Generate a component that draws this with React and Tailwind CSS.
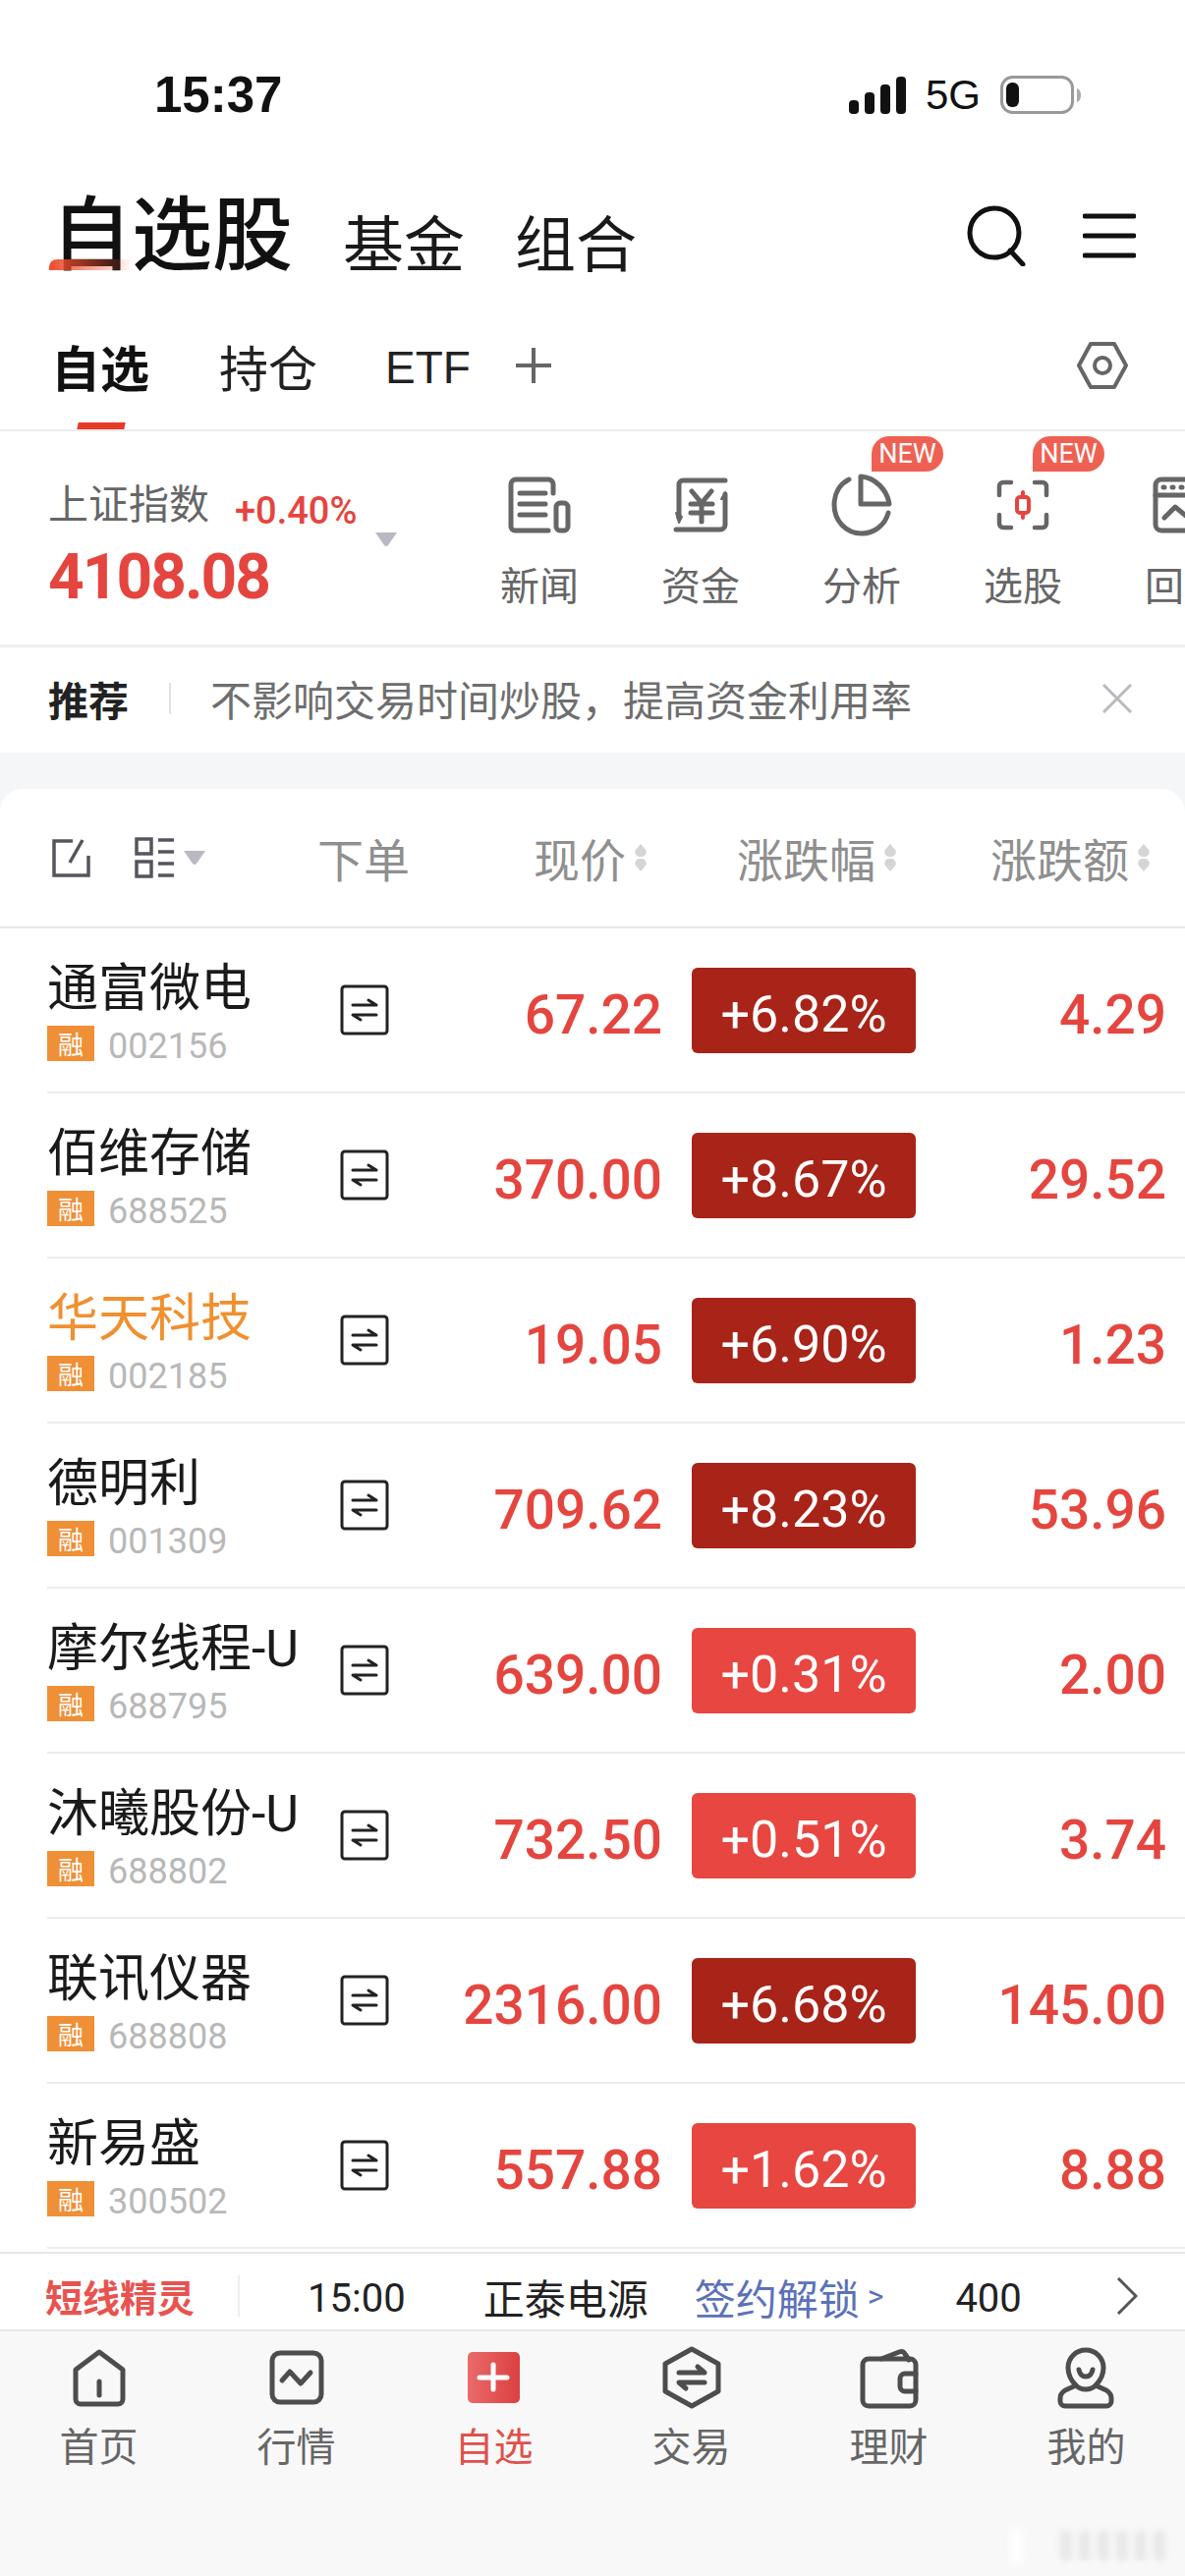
import { Fragment } from 'react';

const stocks = [
  { name: '通富微电', code: '002156', price: '67.22', pct: '+6.82%', chg: '4.29', dark: true },
  { name: '佰维存储', code: '688525', price: '370.00', pct: '+8.67%', chg: '29.52', dark: true },
  { name: '华天科技', code: '002185', price: '19.05', pct: '+6.90%', chg: '1.23', dark: true, orange: true },
  { name: '德明利', code: '001309', price: '709.62', pct: '+8.23%', chg: '53.96', dark: true },
  { name: '摩尔线程-U', code: '688795', price: '639.00', pct: '+0.31%', chg: '2.00' },
  { name: '沐曦股份-U', code: '688802', price: '732.50', pct: '+0.51%', chg: '3.74' },
  { name: '联讯仪器', code: '688808', price: '2316.00', pct: '+6.68%', chg: '145.00', dark: true },
  { name: '新易盛', code: '300502', price: '557.88', pct: '+1.62%', chg: '8.88' },
];

function NewsIcon() {
  return (
    <svg width="64" height="58" viewBox="0 0 64 58" fill="none" stroke="#666" strokeWidth="5" strokeLinecap="round" strokeLinejoin="round">
      <path d="M46 17V8a5 5 0 0 0-5-5H8a5 5 0 0 0-5 5v43a4 4 0 0 0 4 4h34" />
      <path d="M12 17h26M12 28h26M12 39h26" />
      <rect x="49" y="27" width="12" height="28" rx="4" />
    </svg>
  );
}

function FundIcon() {
  return (
    <svg width="56" height="58" viewBox="0 0 56 58" fill="none" stroke="#666" strokeWidth="5" strokeLinecap="round" strokeLinejoin="round">
      <path d="M53 4H10a4 4 0 0 0-4 4v34" />
      <path d="M3 37l3 10 3-6z" fill="#666" strokeWidth="2" />
      <path d="M3 54h45a5 5 0 0 0 5-5V18" />
      <path d="M53 16l-4 7 4 0z" fill="#666" strokeWidth="2" />
      <path d="M19 15l10 12 10-12M18 28h22M18 37h22M29 27v19" />
    </svg>
  );
}

function PieIcon() {
  return (
    <svg width="62" height="64" viewBox="0 0 62 64" fill="none" stroke="#666" strokeWidth="5" strokeLinecap="round" strokeLinejoin="round">
      <path d="M18 6C8 11 3 21 3 32c0 16 12 29 28 29 13 0 24-9 27-21" />
      <path d="M30 3c15 1 27 14 29 28H30z" />
    </svg>
  );
}

function PickIcon() {
  return (
    <svg width="54" height="52" viewBox="0 0 54 52" fill="none" stroke="#666" strokeWidth="4.500" strokeLinecap="round" strokeLinejoin="round">
      <path d="M15 3H7a4 4 0 0 0-4 4v9M39 3h8a4 4 0 0 1 4 4v9M15 49H7a4 4 0 0 1-4-4v-9M39 49h8a4 4 0 0 0 4-4v-9" />
      <rect x="21" y="18" width="12" height="16" rx="3" stroke="#e5453f" strokeWidth="4" />
      <path d="M27 13v4M27 35v4" stroke="#e5453f" strokeWidth="4" />
    </svg>
  );
}

function BacktestIcon() {
  return (
    <svg width="64" height="58" viewBox="0 0 64 58" fill="none" stroke="#666" strokeWidth="5" strokeLinecap="round" strokeLinejoin="round">
      <rect x="3" y="3" width="58" height="52" rx="6" />
      <path d="M3 19h58M12 42l11-11 11 9" />
      <path d="M11 11h1M20 11h1M29 11h1" />
    </svg>
  );
}

const tools = [
  { label: '新闻', icon: <NewsIcon /> },
  { label: '资金', icon: <FundIcon /> },
  { label: '分析', icon: <PieIcon />, isNew: true },
  { label: '选股', icon: <PickIcon />, isNew: true },
  { label: '回测', icon: <BacktestIcon /> },
];

function SortArrows() {
  return (
    <svg width="14" height="28" viewBox="0 0 14 28" fill="#d5d5d8" className="ml-[8px] shrink-0">
      <path d="M7 0l5.5 6.5A5 5 0 0 1 7 13 5 5 0 0 1 1.500 6.500z" />
      <path d="M7 28l5.500-6.500A5 5 0 0 0 7 15a5 5 0 0 0-5.500 6.500z" />
    </svg>
  );
}

function SwapIcon() {
  return (
    <svg width="50" height="52" viewBox="0 0 50 52" fill="none" stroke="#222" strokeWidth="3" strokeLinecap="round" strokeLinejoin="round" className="shrink-0">
      <rect x="2" y="2" width="46" height="48" rx="3" />
      <path d="M13 21h24l-8-5" />
      <path d="M37 31H13l8 5" />
    </svg>
  );
}

function NavIcon({ type }) {
  const common = { fill: 'none', stroke: '#4d4d4d', strokeWidth: 5, strokeLinecap: 'round', strokeLinejoin: 'round' };
  if (type === 'home') {
    return (
      <svg width="60" height="64" viewBox="0 0 60 64" {...common}>
        <path d="M30 6L6 24v30a5 5 0 0 0 5 5h38a5 5 0 0 0 5-5V24z" />
        <path d="M30 36v14" />
      </svg>
    );
  }
  if (type === 'market') {
    return (
      <svg width="60" height="64" viewBox="0 0 60 64" {...common}>
        <rect x="5" y="7" width="50" height="50" rx="8" />
        <path d="M15 35l8-9 11 12 10-11" />
      </svg>
    );
  }
  if (type === 'add') {
    return (
      <svg width="60" height="64" viewBox="0 0 60 64">
        <defs>
          <linearGradient id="addFill" x1="0" x2="1" y1="0" y2="0">
            <stop offset="0" stopColor="#e96a6a" />
            <stop offset="1" stopColor="#dd4040" />
          </linearGradient>
        </defs>
        <rect x="3" y="6" width="53" height="52" rx="5" fill="url(#addFill)" />
        <path d="M29 19v25M15 32h28" stroke="#fff" strokeWidth="5" strokeLinecap="round" />
      </svg>
    );
  }
  if (type === 'trade') {
    return (
      <svg width="60" height="64" viewBox="0 0 60 64" {...common}>
        <path d="M30 3L57 18v28L30 61 3 46V18z" />
        <path d="M17 27h26l-7-6M43 37H17l7 6" />
      </svg>
    );
  }
  if (type === 'wallet') {
    return (
      <svg width="60" height="64" viewBox="0 0 60 64" {...common}>
        <path d="M22 13L40 6c3-1 5 0 6 2l4 6" />
        <path d="M9 13h42a6 6 0 0 1 6 6v36a6 6 0 0 1-6 6H9a6 6 0 0 1-6-6V19a6 6 0 0 1 6-6z" />
        <path d="M57 28H46a5 5 0 0 0-5 5v8a5 5 0 0 0 5 5h11" />
      </svg>
    );
  }
  return (
    <svg width="60" height="64" viewBox="0 0 60 64" {...common}>
      <path d="M19 40c-5-5-8-11-8-18C11 12 19 4 29 4s18 8 18 18c0 7-3 13-8 18" />
      <path d="M19 40l-11 5c-3 2-5 4-5 8v3a5 5 0 0 0 5 5h42a5 5 0 0 0 5-5v-3c0-4-2-6-5-8l-11-5c-3 3-6 4-10 4s-7-1-10-4z" />
      <path d="M22 24c1 5 4 7 7 7s6-2 7-7" />
    </svg>
  );
}

const navItems = [
  { label: '首页', type: 'home' },
  { label: '行情', type: 'market' },
  { label: '自选', type: 'add', active: true },
  { label: '交易', type: 'trade' },
  { label: '理财', type: 'wallet' },
  { label: '我的', type: 'me' },
];

export default function App() {
  return (
    <div className="relative flex h-[2622px] w-[1206px] flex-col overflow-hidden bg-white font-['Noto_Sans_CJK_SC',sans-serif]">
      {/* status bar */}
      <div className="flex h-[180px] items-start justify-between pl-[157px] pr-[106px] pt-[68px]">
        <span className="font-['Liberation_Sans',sans-serif] text-[51px] font-bold leading-[58px] text-[#111]">15:37</span>
        <div className="flex h-[58px] items-center gap-[20px]">
          <svg width="58" height="38" viewBox="0 0 58 38" fill="#111">
            <rect x="0" y="24" width="10" height="14" rx="4" />
            <rect x="16" y="16" width="10" height="22" rx="4" />
            <rect x="32" y="8" width="10" height="30" rx="4" />
            <rect x="48" y="0" width="10" height="38" rx="4" />
          </svg>
          <span className="font-['Liberation_Sans',sans-serif] text-[42px] leading-[58px] text-[#111]">5G</span>
          <svg width="82" height="40" viewBox="0 0 82 40" fill="none">
            <rect x="1.5" y="1.5" width="72" height="36" rx="11" stroke="#999" strokeWidth="3" />
            <rect x="6" y="7" width="13" height="25" rx="6" fill="#111" />
            <path d="M78 13c3 1 4 4 4 7s-1 6-4 7z" fill="#aaa" />
          </svg>
        </div>
      </div>

      {/* title row */}
      <div className="relative flex h-[116px] items-end pl-[52px] pr-[50px]">
        <span className="mb-[8px] text-[82px] font-medium leading-[110px] text-[#111]">自选股</span>
        <span className="mb-[3px] ml-[51px] text-[62px] leading-[96px] text-[#1a1a1a]">基金</span>
        <span className="mb-[3px] ml-[51px] text-[62px] leading-[96px] text-[#1a1a1a]">组合</span>
        <div className="ml-auto flex items-center gap-[56px] self-center pt-[4px]">
          <svg width="62" height="62" viewBox="0 0 62 62" fill="none" stroke="#111" strokeWidth="5" strokeLinecap="round">
            <circle cx="28" cy="28" r="25" />
            <path d="M44 46l13 14" />
          </svg>
          <svg width="54" height="46" viewBox="0 0 54 46" stroke="#111" strokeWidth="5" strokeLinecap="round">
            <path d="M2 3h50M2 23h50M2 43h50" />
          </svg>
        </div>
        <span className="absolute bottom-[21px] left-[50px] h-[11px] w-[86px] rounded-tl-[8px] bg-gradient-to-r from-[#ec4a2c] to-[#ec4a2c00]" />
      </div>

      {/* sub tabs */}
      <div className="relative flex h-[143px] items-center border-b-2 border-[#ececec] pl-[52px] pr-[58px] pt-[10px]">
        <span className="text-[50px] font-bold leading-[70px] text-[#111]">自选</span>
        <span className="ml-[71px] text-[50px] leading-[70px] text-[#222]">持仓</span>
        <span className="ml-[69px] pt-[5px] font-['Liberation_Sans',sans-serif] text-[46px] leading-[70px] text-[#222]">ETF</span>
        <svg width="36" height="36" viewBox="0 0 36 36" stroke="#666" strokeWidth="4" className="ml-[46px]">
          <path d="M18 0v36M0 18h36" />
        </svg>
        <svg width="52" height="50" viewBox="0 0 52 50" fill="none" stroke="#666" strokeWidth="4" strokeLinejoin="round" className="ml-auto">
          <path d="M14 3h24l12 22-12 22H14L2 25z" />
          <circle cx="26" cy="25" r="8" />
        </svg>
        <span className="absolute bottom-0 left-[79px] h-[7px] w-[48px] -skew-x-12 bg-[#e83a26]" />
      </div>

      {/* index and tools */}
      <div className="flex h-[220px] items-start overflow-hidden border-b-[3px] border-[#eeeeee]">
        <div className="relative w-[467px] shrink-0 pl-[49px] pt-[42px]">
          <div className="flex items-end">
            <span className="text-[41px] leading-[58px] text-[#666]">上证指数</span>
            <span className="-mb-[6px] ml-[26px] font-[Roboto,sans-serif] text-[38px] font-medium leading-[50px] text-[#e5453f]">+0.40%</span>
          </div>
          <div className="mt-[10px] font-[Roboto,sans-serif] text-[64px] font-bold leading-[78px] tracking-[-2px] text-[#e5453f]">4108.08</div>
          <svg width="24" height="16" viewBox="0 0 24 16" fill="#b9b9c4" className="absolute left-[381px] top-[102px]">
            <path d="M1 1h22L14 14a3 3 0 0 1-4 0z" />
          </svg>
        </div>
        <div className="flex">
          {tools.map((tool) => (
            <div key={tool.label} className="relative flex w-[164px] shrink-0 flex-col items-center pt-[43px]">
              <div className="flex h-[64px] items-center justify-center">{tool.icon}</div>
              <span className="mt-[20px] text-[40px] leading-[56px] text-[#666]">{tool.label}</span>
              {tool.isNew && (
                <span className="absolute left-[92px] top-[5px] flex h-[36px] w-[73px] items-center justify-center rounded-r-[18px] rounded-tl-[18px] bg-[#ee6152] font-[Roboto,sans-serif] text-[27px] leading-none text-white">NEW</span>
              )}
            </div>
          ))}
        </div>
      </div>

      {/* tip */}
      <div className="flex h-[107px] items-center rounded-b-[24px] bg-white pb-[3px] pl-[49px] pr-[54px]">
        <span className="text-[41px] font-bold leading-[56px] text-[#222]">推荐</span>
        <span className="ml-[41px] h-[32px] w-[2px] bg-[#e3e3e3]" />
        <span className="ml-[40px] text-[42px] leading-[60px] text-[#6e6e6e]">不影响交易时间炒股，提高资金利用率</span>
        <svg width="30" height="30" viewBox="0 0 30 30" stroke="#b9b9c0" strokeWidth="3" className="ml-auto">
          <path d="M1 1l28 28M29 1L1 29" />
        </svg>
      </div>

      <div className="h-[37px] shrink-0 bg-[#f5f6f8]" />

      {/* list */}
      <div className="flex-1 overflow-hidden bg-[#f5f6f8]">
        <div className="h-full rounded-t-[24px] bg-white">
          <div className="flex h-[142px] items-center border-b-2 border-[#e8e8e8]">
            <svg width="40" height="40" viewBox="0 0 40 40" fill="none" stroke="#55555f" strokeWidth="3.5" className="ml-[52px] shrink-0">
              <path d="M22 3H3v35h35V18M32 2L19 25" />
            </svg>
            <svg width="42" height="42" viewBox="0 0 42 42" fill="none" stroke="#55555f" strokeWidth="3.5" className="ml-[45px] shrink-0">
              <rect x="2" y="2" width="15" height="15" />
              <rect x="2" y="25" width="15" height="15" />
              <path d="M24 3h16M24 15h16M24 27h16M24 39h16" />
            </svg>
            <svg width="22" height="14" viewBox="0 0 22 14" fill="#b9b9c4" className="ml-[8px] shrink-0">
              <path d="M0 0h22L13 13a3 3 0 0 1-4 0z" />
            </svg>
            <span className="ml-[114px] w-[220px] text-[47px] leading-[60px] text-[#8f8f8f]">下单</span>
            <span className="flex w-[207px] items-center text-[47px] leading-[60px] text-[#8f8f8f]">现价<SortArrows /></span>
            <span className="flex w-[258px] items-center text-[47px] leading-[60px] text-[#8f8f8f]">涨跌幅<SortArrows /></span>
            <span className="flex items-center text-[47px] leading-[60px] text-[#8f8f8f]">涨跌额<SortArrows /></span>
          </div>
          {stocks.map((stock) => (
            <Fragment key={stock.code}>
              <div className="flex h-[166px] items-center pl-[48px]">
                <div className="w-[298px] shrink-0">
                  <div className={`whitespace-nowrap font-[Roboto,'Noto_Sans_CJK_SC',sans-serif] text-[52px] leading-[72px] ${stock.orange ? 'text-[#f0902f]' : 'text-[#1a1a1a]'}`}>{stock.name}</div>
                  <div className="mt-[1px] flex items-start">
                    <span className="flex h-[36px] w-[48px] items-center justify-center bg-[#ef8f36] text-[26px] leading-none text-white">融</span>
                    <span className="ml-[14px] pt-[1px] font-[Roboto,sans-serif] text-[36px] leading-[40px] text-[#b8b8b8]">{stock.code}</span>
                  </div>
                </div>
                <SwapIcon />
                <span className="w-[278px] shrink-0 pt-[10px] text-right font-[Roboto,sans-serif] text-[55px] font-medium leading-[70px] text-[#e5453f]">{stock.price}</span>
                <span className={`ml-[30px] flex h-[87px] w-[228px] shrink-0 items-center justify-center rounded-[6px] pt-[10px] font-[Roboto,sans-serif] text-[52px] font-normal text-white ${stock.dark ? 'bg-[#a82318]' : 'bg-[#e84640]'}`}>{stock.pct}</span>
                <span className="w-[255px] shrink-0 pt-[10px] text-right font-[Roboto,sans-serif] text-[55px] font-medium leading-[70px] text-[#e5453f]">{stock.chg}</span>
              </div>
              <div className="ml-[48px] h-[2px] bg-[#ececec]" />
            </Fragment>
          ))}
        </div>
      </div>

      {/* ticker */}
      <div className="relative flex h-[81px] shrink-0 items-center border-y-2 border-[#e6e6e6] bg-white pl-[46px] pr-[48px] pt-[9px]">
        <span className="text-[38px] font-bold leading-[56px] text-[#e8534f]">短线精灵</span>
        <span className="ml-[44px] h-[42px] w-[2px] bg-[#eeeeee]" />
        <span className="ml-[69px] pt-[6px] font-[Roboto,sans-serif] text-[40px] leading-[56px] text-[#222]">15:00</span>
        <span className="ml-[79px] pt-[2px] text-[42px] leading-[56px] text-[#222]">正泰电源</span>
        <span className="ml-[47px] pt-[2px] text-[42px] leading-[56px] text-[#5a72b8]">签约解锁</span>
        <span className="ml-[8px] font-[Roboto,sans-serif] text-[32px] leading-[56px] text-[#5a72b8]">&gt;</span>
        <span className="ml-[73px] pt-[6px] font-[Roboto,sans-serif] text-[40px] leading-[56px] text-[#222]">400</span>
        <svg width="22" height="38" viewBox="0 0 22 38" fill="none" stroke="#555" strokeWidth="3" className="ml-auto">
          <path d="M2 1l18 18L2 37" />
        </svg>
      </div>

      {/* bottom nav */}
      <div className="grid h-[249px] shrink-0 grid-cols-6 bg-[#f8f8f8] pt-[15px]">
        {navItems.map((item) => (
          <div key={item.label} className="flex flex-col items-center">
            <NavIcon type={item.type} />
            <span className={`mt-[8px] text-[40px] leading-[56px] ${item.active ? 'text-[#e0504c]' : 'text-[#666]'}`}>{item.label}</span>
          </div>
        ))}
      </div>

      {/* blurred watermark */}
      <div className="absolute bottom-[12px] right-[20px] flex h-[38px] items-center gap-[7px] opacity-80 blur-[3px]">
        <span className="mr-[30px] h-[36px] w-[14px] bg-white" />
        <span className="h-[30px] w-[12px] bg-[#e4e4e4]" />
        <span className="h-[30px] w-[12px] bg-[#e4e4e4]" />
        <span className="h-[30px] w-[12px] bg-[#e4e4e4]" />
        <span className="h-[30px] w-[12px] bg-[#e4e4e4]" />
        <span className="h-[30px] w-[12px] bg-[#e4e4e4]" />
        <span className="h-[30px] w-[12px] bg-[#e4e4e4]" />
      </div>
    </div>
  );
}
